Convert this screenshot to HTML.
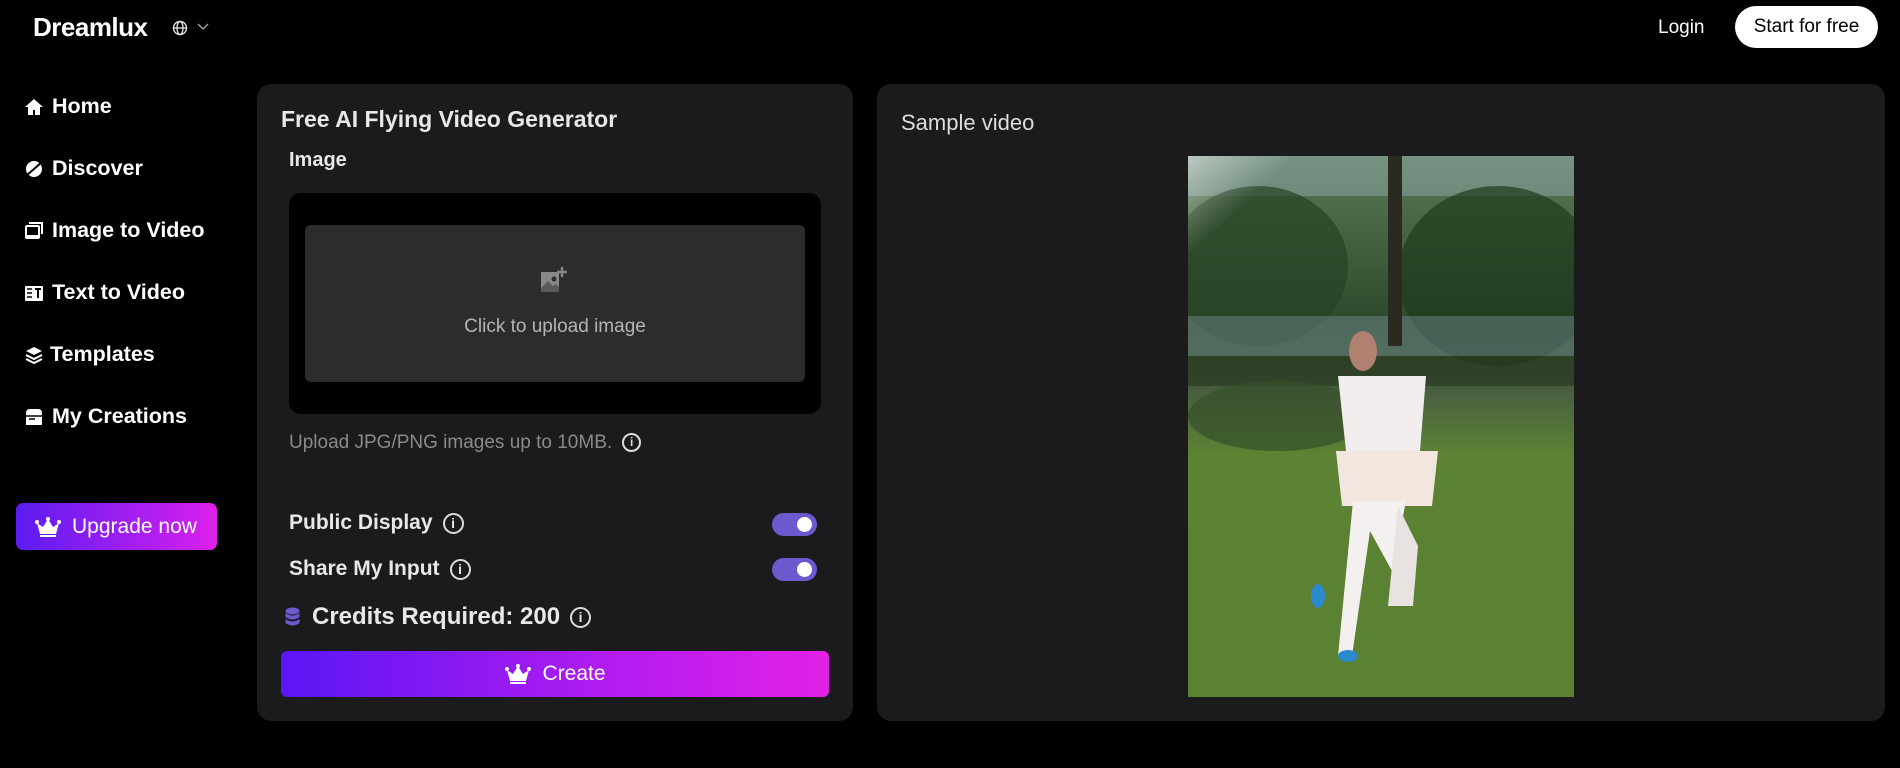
<!DOCTYPE html>
<html><head><meta charset="utf-8"><style>
*{box-sizing:border-box;margin:0;padding:0}
body{width:1900px;height:768px;background:#000;font-family:"Liberation Sans",sans-serif;color:#fff;position:relative;overflow:hidden}
.a{position:absolute}
.logo{left:33px;top:12px;font-size:26px;font-weight:bold;letter-spacing:-0.5px}
.nav{left:24px;font-size:21.5px;font-weight:bold;display:flex;align-items:center;gap:8px}
.nav svg{width:20px;height:20px}
.panel{background:#1b1b1d;border-radius:14px}
.lbl{font-weight:bold;color:#e8e8e8}
.tog{width:45px;height:23px;border-radius:12px;background:#6a5acd}
.tog:after{content:"";position:absolute;right:5px;top:4px;width:15px;height:15px;border-radius:50%;background:#fff}
.info{display:inline-block;width:21px;height:21px;border:2px solid #ddd;border-radius:50%;font-size:14px;text-align:center;line-height:17px;font-weight:bold;vertical-align:middle;margin-left:10px}
</style></head><body>
<div class="a logo">Dreamlux</div>
<svg class="a" style="left:172px;top:20px" width="16" height="16" viewBox="0 0 16 16" fill="none" stroke="#ddd" stroke-width="1.4"><circle cx="8" cy="8" r="6.5"/><ellipse cx="8" cy="8" rx="3" ry="6.5"/><path d="M1.5 8h13"/></svg>
<svg class="a" style="left:197px;top:23px" width="12" height="8" viewBox="0 0 12 8" fill="none" stroke="#aaa" stroke-width="1.3"><path d="M1 1l5 5 5-5"/></svg>
<div class="a" style="left:1658px;top:17px;font-size:19px">Login</div>
<div class="a" style="left:1735px;top:6px;width:143px;height:42px;background:#fff;color:#000;border-radius:21px;font-size:19px;text-align:center;line-height:42px">Start for free</div>

<div class="a nav" style="top:94px"><svg viewBox="0 0 20 20" fill="#fff"><path d="M10 2L1 10h3v8h5v-5h2v5h5v-8h3z"/></svg>Home</div>
<div class="a nav" style="top:156px"><svg viewBox="0 0 20 20" fill="#fff"><circle cx="10" cy="10" r="8"/><path d="M2 17L18 3" stroke="#000" stroke-width="2"/></svg>Discover</div>
<div class="a nav" style="top:218px"><svg viewBox="0 0 20 20" fill="#fff"><rect x="1" y="4" width="15" height="14" rx="2"/><rect x="3" y="6" width="11" height="8" fill="#000"/><path d="M5 2h13v11" stroke="#fff" stroke-width="2" fill="none"/></svg>Image to Video</div>
<div class="a nav" style="top:280px"><svg viewBox="0 0 20 20" fill="#fff"><rect x="1" y="3" width="18" height="15" rx="1"/><path d="M3 6h5M3 10h5M3 14h5" stroke="#000" stroke-width="1.5"/><path d="M11 6h6M14 6v9" stroke="#000" stroke-width="2"/></svg>Text to Video</div>
<div class="a nav" style="top:342px;gap:6px"><svg viewBox="0 0 20 20" fill="#fff"><path d="M10 2l8 4-8 4-8-4z"/><path d="M2 10l8 4 8-4M2 14l8 4 8-4" stroke="#fff" stroke-width="2" fill="none"/></svg>Templates</div>
<div class="a nav" style="top:404px"><svg viewBox="0 0 20 20" fill="#fff"><path d="M2 6q0-4 4-4h8q4 0 4 4v12H2z"/><path d="M2 9h16M5 12h6" stroke="#000" stroke-width="1.5"/></svg>My Creations</div>

<div class="a" style="left:16px;top:503px;width:201px;height:47px;border-radius:7px;background:linear-gradient(90deg,#5b1cf0,#c61ff0 85%,#e020e8);display:flex;align-items:center;padding-left:18px;font-size:21px;gap:10px">
<svg width="28" height="22" viewBox="0 0 28 22" fill="#fff"><path d="M3 7l6 4 5-8 5 8 6-4-3 11H6z"/><circle cx="3" cy="6" r="2"/><circle cx="25" cy="6" r="2"/><circle cx="14" cy="3" r="2"/><rect x="6" y="19" width="16" height="2"/></svg>Upgrade now</div>

<div class="a panel" style="left:257px;top:84px;width:596px;height:637px"></div>
<div class="a lbl" style="left:281px;top:106px;font-size:23px">Free AI Flying Video Generator</div>
<div class="a lbl" style="left:289px;top:149px;font-size:20px">Image</div>
<div class="a" style="left:289px;top:193px;width:532px;height:221px;background:#000;border-radius:12px"></div>
<div class="a" style="left:305px;top:225px;width:500px;height:157px;background:#2c2c2d;border-radius:6px"></div>
<svg class="a" style="left:538px;top:266px" width="32" height="30" viewBox="0 0 32 30"><path d="M3 6h18v20H3z" fill="#888"/><circle cx="16" cy="13" r="2.5" fill="#2c2c2d"/><path d="M3 22l7-7 5 5 3-2 5 5v3H3z" fill="#2c2c2d" opacity=".5"/><path d="M24 1v10M19 6h10" stroke="#888" stroke-width="2.5"/></svg>
<div class="a" style="left:305px;top:316px;width:500px;text-align:center;font-size:19px;color:#b5b5b5">Click to upload image</div>
<div class="a" style="left:289px;top:432px;font-size:19px;color:#8a8a8a">Upload JPG/PNG images up to 10MB.<span class="info" style="width:19px;height:19px;font-size:12px;line-height:15px;color:#ddd;border-color:#ddd">i</span></div>
<div class="a lbl" style="left:289px;top:511px;font-size:21px">Public Display<span class="info">i</span></div>
<div class="a lbl" style="left:289px;top:557px;font-size:21px">Share My Input<span class="info">i</span></div>
<div class="a tog" style="left:772px;top:513px"></div>
<div class="a tog" style="left:772px;top:558px"></div>
<svg class="a" style="left:285px;top:607px" width="15" height="20" viewBox="0 0 15 20" fill="#6a5acd"><ellipse cx="7.5" cy="4" rx="7" ry="3.5"/><path d="M0.5 6q7 5 14 0v4q-7 5-14 0zM0.5 12q7 5 14 0v4q-7 5-14 0z"/></svg>
<div class="a lbl" style="left:312px;top:603px;font-size:24px">Credits Required: 200<span class="info">i</span></div>
<div class="a" style="left:281px;top:651px;width:548px;height:46px;border-radius:6px;background:linear-gradient(90deg,#5a16f5,#b21cf0 60%,#e321e6);display:flex;align-items:center;justify-content:center;gap:10px;font-size:21px">
<svg width="28" height="22" viewBox="0 0 28 22" fill="#fff"><path d="M3 7l6 4 5-8 5 8 6-4-3 11H6z"/><circle cx="3" cy="6" r="2"/><circle cx="25" cy="6" r="2"/><circle cx="14" cy="3" r="2"/><rect x="6" y="19" width="16" height="2"/></svg>Create</div>

<div class="a panel" style="left:877px;top:84px;width:1008px;height:637px"></div>
<div class="a" style="left:901px;top:110px;font-size:22px;color:#ddd">Sample video</div>
<svg class="a" style="left:1188px;top:156px" width="386" height="541" viewBox="0 0 386 541">
<defs><linearGradient id="g" x1="0" y1="0" x2="0" y2="1"><stop offset="0" stop-color="#5a7a55"/><stop offset=".3" stop-color="#2f4a2c"/><stop offset=".4" stop-color="#3a5232"/><stop offset=".44" stop-color="#4a6040"/><stop offset=".55" stop-color="#5c8234"/><stop offset="1" stop-color="#5a8230"/></linearGradient>
<linearGradient id="l" x1="0" y1="0" x2="1" y2="1"><stop offset="0" stop-color="#fff" stop-opacity=".5"/><stop offset=".5" stop-color="#fff" stop-opacity="0"/></linearGradient></defs>
<rect width="386" height="541" fill="url(#g)"/>
<rect y="0" width="386" height="40" fill="#a8c0d8" opacity=".35"/>
<ellipse cx="70" cy="110" rx="90" ry="80" fill="#264224" opacity=".7"/>
<ellipse cx="310" cy="120" rx="100" ry="90" fill="#1e3a1c" opacity=".7"/>
<rect x="0" y="160" width="386" height="40" fill="#8aa4b8" opacity=".35"/>
<rect x="0" y="200" width="386" height="30" fill="#28361f" opacity=".6"/>
<rect x="200" y="0" width="14" height="190" fill="#2a2a20"/>
<path d="M0 0l110 0-110 100z" fill="url(#l)"/>
<ellipse cx="90" cy="260" rx="90" ry="35" fill="#34502a" opacity=".7"/>
<ellipse cx="175" cy="195" rx="14" ry="20" fill="#b08070"/>
<path d="M150 220h88l-6 75h-74z" fill="#f2eeee"/>
<path d="M148 295h102l-6 55h-90z" fill="#f2e6de"/>
<path d="M165 345l-15 155 14 0 18-125 22 40 14-70z" fill="#f4f0f0"/>
<path d="M210 350l20 40-5 60-25 0z" fill="#e8e2e0"/>
<ellipse cx="160" cy="500" rx="10" ry="6" fill="#2a8acc"/>
<ellipse cx="130" cy="440" rx="7" ry="12" fill="#2a8acc"/>
</svg>
</body></html>
